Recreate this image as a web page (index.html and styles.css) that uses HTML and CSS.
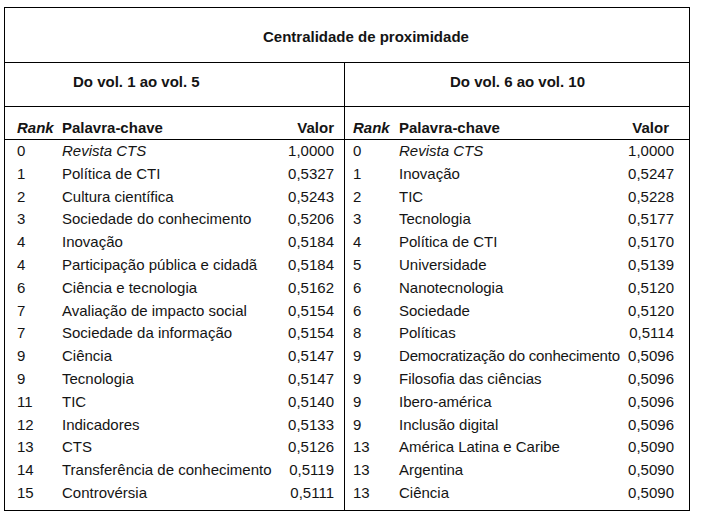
FILE: index.html
```html
<!DOCTYPE html>
<html lang="pt">
<head>
<meta charset="utf-8">
<title>Centralidade de proximidade</title>
<link rel="stylesheet" href="styles.css">
</head>
<body>
<div class="tbl">
  <div class="title">Centralidade de proximidade</div>
  <div class="halves">
    <div class="half left">
      <div class="sub">Do vol. 1 ao vol. 5</div>
      <div class="grid head">
        <span class="rank-h">Rank</span><span>Palavra-chave</span><span class="val">Valor</span>
      </div>
      <div class="grid rows">
        <span>0</span><span class="it">Revista CTS</span><span class="val">1,0000</span>
        <span>1</span><span>Política de CTI</span><span class="val">0,5327</span>
        <span>2</span><span>Cultura científica</span><span class="val">0,5243</span>
        <span>3</span><span>Sociedade do conhecimento</span><span class="val">0,5206</span>
        <span>4</span><span>Inovação</span><span class="val">0,5184</span>
        <span>4</span><span>Participação pública e cidadã</span><span class="val">0,5184</span>
        <span>6</span><span>Ciência e tecnologia</span><span class="val">0,5162</span>
        <span>7</span><span>Avaliação de impacto social</span><span class="val">0,5154</span>
        <span>7</span><span>Sociedade da informação</span><span class="val">0,5154</span>
        <span>9</span><span>Ciência</span><span class="val">0,5147</span>
        <span>9</span><span>Tecnologia</span><span class="val">0,5147</span>
        <span>11</span><span>TIC</span><span class="val">0,5140</span>
        <span>12</span><span>Indicadores</span><span class="val">0,5133</span>
        <span>13</span><span>CTS</span><span class="val">0,5126</span>
        <span>14</span><span>Transferência de conhecimento</span><span class="val">0,5119</span>
        <span>15</span><span>Controvérsia</span><span class="val">0,5111</span>
      </div>
    </div>
    <div class="half right">
      <div class="sub">Do vol. 6 ao vol. 10</div>
      <div class="grid head">
        <span class="rank-h">Rank</span><span>Palavra-chave</span><span class="val val-h">Valor</span>
      </div>
      <div class="grid rows">
        <span>0</span><span class="it">Revista CTS</span><span class="val">1,0000</span>
        <span>1</span><span>Inovação</span><span class="val">0,5247</span>
        <span>2</span><span>TIC</span><span class="val">0,5228</span>
        <span>3</span><span>Tecnologia</span><span class="val">0,5177</span>
        <span>4</span><span>Política de CTI</span><span class="val">0,5170</span>
        <span>5</span><span>Universidade</span><span class="val">0,5139</span>
        <span>6</span><span>Nanotecnologia</span><span class="val">0,5120</span>
        <span>6</span><span>Sociedade</span><span class="val">0,5120</span>
        <span>8</span><span>Políticas</span><span class="val">0,5114</span>
        <span>9</span><span class="tight">Democratização do conhecimento</span><span class="val">0,5096</span>
        <span>9</span><span>Filosofia das ciências</span><span class="val">0,5096</span>
        <span>9</span><span>Ibero-américa</span><span class="val">0,5096</span>
        <span>9</span><span>Inclusão digital</span><span class="val">0,5096</span>
        <span>13</span><span>América Latina e Caribe</span><span class="val">0,5090</span>
        <span>13</span><span>Argentina</span><span class="val">0,5090</span>
        <span>13</span><span>Ciência</span><span class="val">0,5090</span>
      </div>
    </div>
  </div>
</div>
</body>
</html>
```

FILE: styles.css
```css
html, body {
  margin: 0;
  padding: 0;
  background: #ffffff;
}

body {
  font-family: "Liberation Sans", Arial, Helvetica, sans-serif;
  font-size: 15px;
  color: #141414;
}

.tbl {
  box-sizing: border-box;
  margin: 7px 0 0 4px;
  width: 686px;
  height: 504px;
  border: 1px solid #000;
  display: flex;
  flex-direction: column;
}

.title {
  box-sizing: border-box;
  height: 55px;
  border-bottom: 1px solid #000;
  padding: 20px 0 0 258px;
  line-height: 17px;
  font-weight: bold;
}

.halves {
  flex: 1;
  display: flex;
}

.half {
  display: flex;
  flex-direction: column;
}

.left {
  box-sizing: border-box;
  width: 340px;
  border-right: 1px solid #000;
}

.right {
  flex: 1;
}

.sub {
  box-sizing: border-box;
  height: 44px;
  border-bottom: 1px solid #000;
  padding-top: 10px;
  line-height: 17px;
  font-weight: bold;
}

.left .sub { padding-left: 68px; }
.right .sub { padding-left: 105px; }

.grid {
  display: grid;
  line-height: 17px;
}

.left .grid {
  grid-template-columns: 45px 1fr auto;
  padding: 0 10px 0 12px;
}

.right .grid {
  grid-template-columns: 46px 1fr auto;
  padding: 0 15px 0 8px;
}

.head {
  box-sizing: border-box;
  height: 33px;
  border-bottom: 1px solid #000;
  padding-top: 12px !important;
  font-weight: bold;
}

.rank-h {
  font-style: italic;
}

.val {
  text-align: right;
}

.val-h {
  padding-right: 5px;
}

.rows {
  grid-auto-rows: 22.8px;
  align-items: start;
  padding-top: 2px !important;
}

.it {
  font-style: italic;
}

.tight {
  letter-spacing: -0.2px;
}
```
